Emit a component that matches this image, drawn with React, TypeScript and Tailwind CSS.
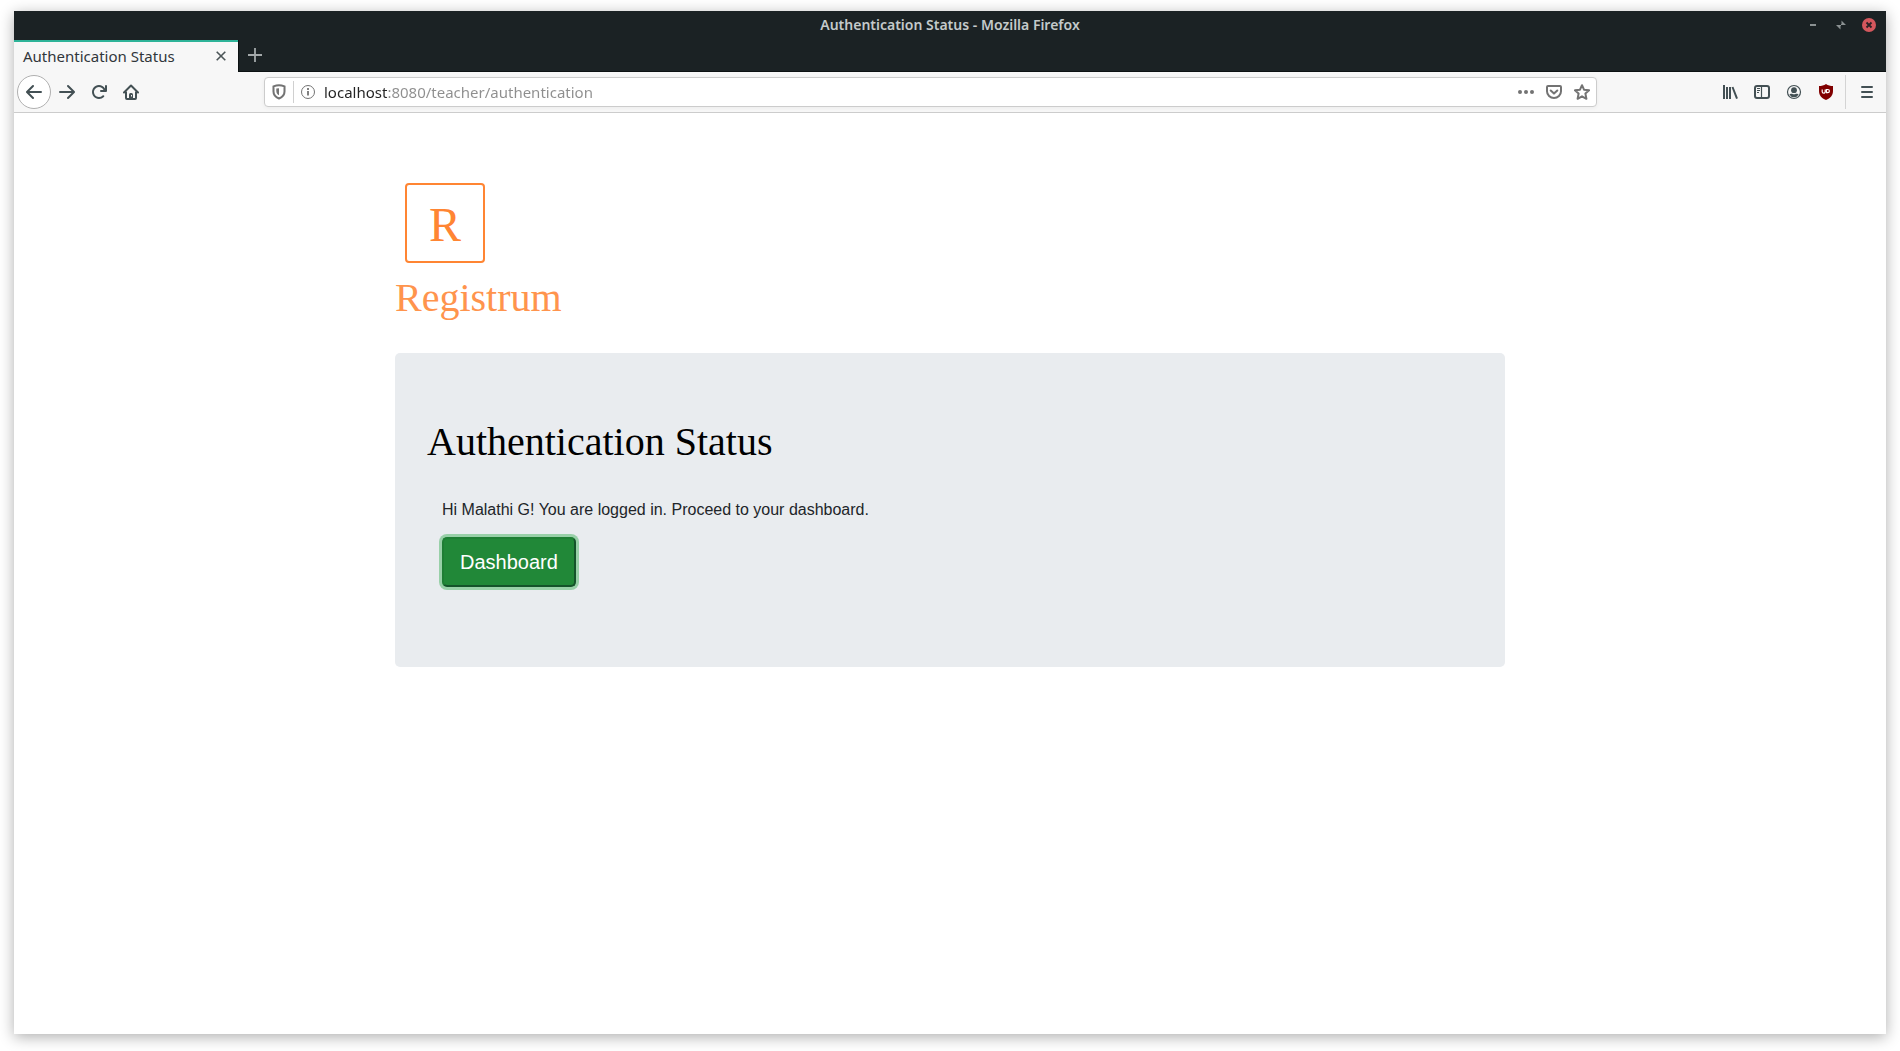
import React from "react";

type IconProps = { className?: string; children: React.ReactNode; box?: string };

function Icon({ className = "size-4", children, box = "0 0 16 16" }: IconProps) {
  return (
    <svg viewBox={box} className={className} fill="none" stroke="currentColor" strokeWidth="2" aria-hidden="true">
      {children}
    </svg>
  );
}

function ToolButton({ label, children }: { label: string; children: React.ReactNode }) {
  return (
    <button type="button" aria-label={label} className="flex size-8 shrink-0 items-center justify-center rounded-sm hover:bg-black/10">
      {children}
    </button>
  );
}

function TitleBar() {
  return (
    <div className="grid h-7 grid-cols-[1fr_auto_1fr] items-center text-[#c4cacb]">
      <span />
      <span className="font-['Noto_Sans',sans-serif] text-sm font-semibold">Authentication Status - Mozilla Firefox</span>
      <div className="flex items-center justify-end gap-3 pr-[9px]">
        <button type="button" aria-label="Minimize" className="flex size-4 items-center justify-center text-[#8b9192]">
          <Icon><path d="M5 8h6" /></Icon>
        </button>
        <button type="button" aria-label="Restore" className="flex size-4 items-center justify-center text-[#8b9192]">
          <Icon>
            <path d="M8.500 3.500v4.500h4.500zM3 8h4.500v4.500z" fill="currentColor" stroke="none" />
            <path d="M7 9l2-2" strokeWidth="1" />
          </Icon>
        </button>
        <button type="button" aria-label="Close window" className="flex size-4 items-center justify-center">
          <Icon>
            <circle cx="8" cy="8" r="7" fill="#d4575d" stroke="none" />
            <path d="M5.500 5.500l5 5M10.500 5.500l-5 5" stroke="#2b2226" strokeWidth="1.800" />
          </Icon>
        </button>
      </div>
    </div>
  );
}

function TabStrip() {
  return (
    <div className="flex h-[33px] items-stretch border-b border-b-[#0c1112] pt-px">
      <div className="relative z-10 -mb-px flex w-56 items-center justify-between border-t-2 border-[#2eb398] bg-[#f7f7f7] pr-3 pb-[3px] pl-[9px]">
        <span className="font-['Noto_Sans',sans-serif] text-[15px] leading-5 text-[#31363b]">Authentication Status</span>
        <button type="button" aria-label="Close tab" className="text-[#4b5557]">
          <Icon className="size-[10px]" box="0 0 10 10"><path d="M0.700 0.700l8.600 8.600M9.300 0.700l-8.600 8.600" strokeWidth="1.600" /></Icon>
        </button>
      </div>
      <button type="button" aria-label="New tab" className="flex w-8 items-center justify-center border-l border-[#0c1112] pb-0.5 text-[#a4a9aa]">
        <Icon><path d="M8 1v14M1 8h14" strokeWidth="1.800" /></Icon>
      </button>
    </div>
  );
}

function AddressBar() {
  return (
    <div className="mx-[117px] flex h-[30px] min-w-0 flex-1 items-center rounded border border-[#cccccc] bg-white text-[#737373] shadow-[0_1px_4px_rgba(0,0,0,0.05)]">
      <button type="button" aria-label="Tracking protection" className="flex h-full w-7 items-center justify-center">
        <Icon className="size-[18px]">
          <path d="M8 2c1.700 0 3.300.4 4.900 1v4.500c0 2.900-1.700 5-4.900 6.300-3.200-1.300-4.900-3.400-4.900-6.300V3C4.700 2.400 6.300 2 8 2z" strokeWidth="1.800" />
          <path d="M8 4.600v6.300C6.300 9.800 5.600 8.600 5.600 7V4.900z" fill="currentColor" stroke="none" />
        </Icon>
      </button>
      <span className="h-[22px] w-px bg-[#d0d0d0]" />
      <button type="button" aria-label="Site information" className="flex h-full w-7 items-center justify-center">
        <Icon>
          <circle cx="8" cy="8" r="6.500" strokeWidth="1" />
          <path d="M8 7v4.500M8 4v2" strokeWidth="1.800" />
        </Icon>
      </button>
      <input
        type="text"
        aria-label="Address"
        defaultValue="localhost:8080/teacher/authentication"
        className="h-full min-w-0 flex-1 bg-[linear-gradient(90deg,#222222_66px,#8e8e8e_66px)] bg-clip-text pl-0.5 font-['Noto_Sans',sans-serif] text-[15px] text-transparent outline-none"
      />
      <div className="flex">
        <button type="button" aria-label="Page actions" className="flex size-7 items-center justify-center">
          <Icon>
            <g fill="currentColor" stroke="none"><circle cx="2" cy="8" r="2" /><circle cx="8" cy="8" r="2" /><circle cx="14" cy="8" r="2" /></g>
          </Icon>
        </button>
        <button type="button" aria-label="Save to Pocket" className="flex size-7 items-center justify-center">
          <Icon>
            <path d="M2 2h12a1 1 0 0 1 1 1v4.200a7 6.800 0 0 1-14 0V3a1 1 0 0 1 1-1z" />
            <path d="M4.700 6.500L8 9.600l3.300-3.100" strokeLinecap="round" strokeLinejoin="round" />
          </Icon>
        </button>
        <button type="button" aria-label="Bookmark this page" className="flex size-7 items-center justify-center">
          <Icon>
            <path d="M8 1.200l2 4.500 5.100.6-3.700 3.300 1 5.200L8 12.300l-4.400 2.500 1-5.200L0.900 6.300 6 5.700z" strokeLinejoin="round" />
          </Icon>
        </button>
      </div>
    </div>
  );
}

function Toolbar() {
  return (
    <div className="flex h-[41px] items-center border-b border-[#cccccc] bg-[#f7f7f7] px-[3px] text-[#435054]">
      <button type="button" aria-label="Back" className="flex size-[34px] shrink-0 items-center justify-center rounded-full border border-[#b0b0b0] bg-white">
        <Icon>
          <path d="M15 7H3.414l4.293-4.293a1 1 0 0 0-1.414-1.414l-6 6a1 1 0 0 0 0 1.414l6 6a1 1 0 0 0 1.414-1.414L3.414 9H15a1 1 0 0 0 0-2z" fill="currentColor" stroke="none" />
        </Icon>
      </button>
      <ToolButton label="Forward">
        <Icon>
          <path d="M1 7h11.586L8.293 2.707a1 1 0 0 1 1.414-1.414l6 6a1 1 0 0 1 0 1.414l-6 6a1 1 0 0 1-1.414-1.414L12.586 9H1a1 1 0 0 1 0-2z" fill="currentColor" stroke="none" />
        </Icon>
      </ToolButton>
      <ToolButton label="Reload">
        <Icon>
          <path d="M15 1a1 1 0 0 0-1 1v2.418A6.995 6.995 0 1 0 8 15a6.954 6.954 0 0 0 4.950-2.050 1 1 0 0 0-1.414-1.414A5.019 5.019 0 1 1 12.549 6H10a1 1 0 0 0 0 2h5a1 1 0 0 0 1-1V2a1 1 0 0 0-1-1z" fill="currentColor" stroke="none" />
        </Icon>
      </ToolButton>
      <ToolButton label="Home">
        <Icon>
          <path d="M1 8.500L8 1.500l7 7" strokeLinecap="round" strokeLinejoin="round" />
          <path d="M3 7.500V14a1 1 0 0 0 1 1h8a1 1 0 0 0 1-1V7.500" />
          <path d="M6 15v-4.500A1.500 1.500 0 0 1 7.500 9h1A1.500 1.500 0 0 1 10 10.500V15z" fill="currentColor" stroke="none" />
          <path d="M8.500 11v1.500" stroke="#f7f7f7" strokeWidth="1" />
        </Icon>
      </ToolButton>
      <AddressBar />
      <ToolButton label="Library">
        <Icon><path d="M2 1v14M5 3v12M8 3v12M10.500 3l4.500 11.700" /></Icon>
      </ToolButton>
      <ToolButton label="Sidebars">
        <Icon>
          <rect x="1" y="2" width="14" height="12" rx="2" />
          <path d="M7.500 2v12" strokeWidth="1.200" />
          <path d="M3 4.500h3M3 6.500h3M3 8.500h2" strokeWidth="1" />
        </Icon>
      </ToolButton>
      <ToolButton label="Account">
        <Icon>
          <circle cx="8" cy="8" r="6.500" strokeWidth="1.200" />
          <circle cx="8" cy="6.200" r="2.900" fill="currentColor" stroke="none" />
          <path d="M3.400 10.500c1.200-.8 1.500-.8 2.800-.8.800.7 2.800.7 3.600 0 1.300 0 1.600 0 2.800.8A5.300 5.300 0 0 1 8 13.300a5.300 5.300 0 0 1-4.600-2.800z" fill="currentColor" stroke="none" />
        </Icon>
      </ToolButton>
      <ToolButton label="uBlock Origin">
        <Icon>
          <path d="M8 0c2 1.500 4.500 2 7 2v5c0 4.500-2.500 7-7 9-4.500-2-7-4.500-7-9V2c2.500 0 5-.5 7-2z" fill="#800000" stroke="none" />
          <path d="M4.200 5.500v2.200a1.500 1.500 0 0 0 3 0V5.500M8.500 5.500v3.200h1.300a1.600 1.600 0 0 0 0-3.200z" stroke="#ffffff" strokeWidth="1.200" />
        </Icon>
      </ToolButton>
      <span className="mr-[5px] ml-[3px] h-[34px] w-px shrink-0 bg-[#d4d4d4]" />
      <ToolButton label="Open menu">
        <Icon><path d="M3 3h10M3 8h10M3 13h10" strokeLinecap="round" /></Icon>
      </ToolButton>
    </div>
  );
}

export default function App() {
  return (
    <div className="flex min-h-screen flex-col bg-white px-[14px] pt-[11px] pb-[17px]">
      <div className="flex flex-1 flex-col bg-white shadow-[0_3px_14px_rgba(0,0,0,0.32)]">
        <header className="bg-[#1b2224]">
          <TitleBar />
          <TabStrip />
          <Toolbar />
        </header>
        <main className="mx-auto w-full max-w-[1110px] flex-1 pt-[70px]">
          <div className="ml-[10px] flex size-20 items-center justify-center rounded border-2 border-[#ff8533] pt-1 font-['Liberation_Serif',serif] text-5xl text-[#ff8533]">
            R
          </div>
          <h1 className="mt-[11px] font-['Liberation_Serif',serif] text-[40px] leading-[48px] text-[#ff944d]">Registrum</h1>
          <section className="mt-[31px] rounded-[5px] bg-[#e9ecef] px-8 pt-[65px] pb-20">
            <h2 className="font-['Liberation_Serif',serif] text-[40px] leading-[48px] text-black">Authentication Status</h2>
            <div className="mt-8 px-[15px] font-['Liberation_Sans',sans-serif]">
              <p className="text-base text-[#212529]">Hi Malathi G! You are logged in. Proceed to your dashboard.</p>
              <button
                type="button"
                className="mt-[15px] rounded-[5px] border-2 border-t-[#1e7e34] border-r-[#14532a] border-b-[#14532a] border-l-[#1e7e34] bg-[#218838] px-4 py-2 text-xl leading-[30px] text-white shadow-[0_0_0_3px_rgba(72,180,97,0.5)]"
              >
                Dashboard
              </button>
            </div>
          </section>
        </main>
      </div>
    </div>
  );
}
